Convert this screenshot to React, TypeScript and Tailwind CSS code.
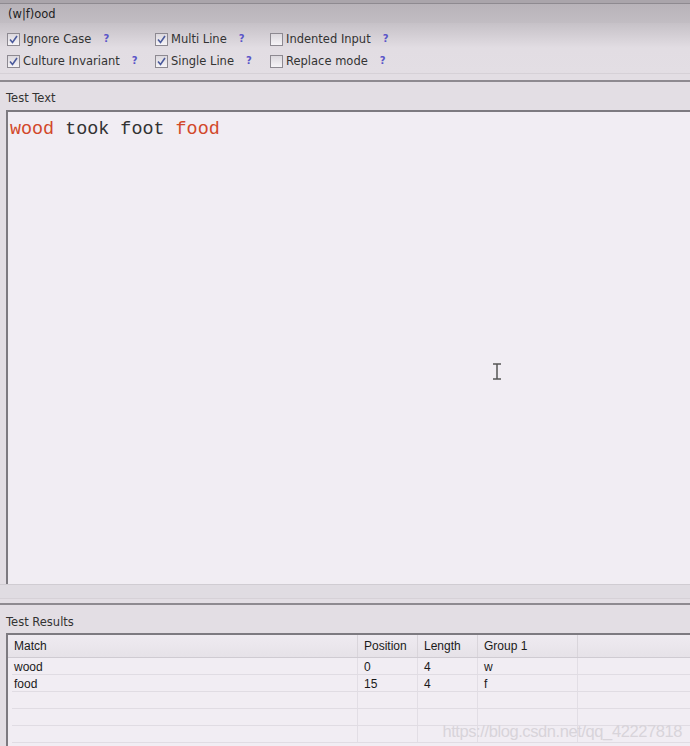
import React from 'react';

const options = [
  [
    { label: 'Ignore Case', checked: true, w: 'w-[148px]' },
    { label: 'Multi Line', checked: true, w: 'w-[115px]' },
    { label: 'Indented Input', checked: false, w: 'w-[130px]' },
  ],
  [
    { label: 'Culture Invariant', checked: true, w: 'w-[148px]' },
    { label: 'Single Line', checked: true, w: 'w-[115px]' },
    { label: 'Replace mode', checked: false, w: 'w-[130px]' },
  ],
];

const results = [
  { match: 'wood', pos: '0', len: '4', g1: 'w' },
  { match: 'food', pos: '15', len: '4', g1: 'f' },
  { match: '', pos: '', len: '', g1: '' },
  { match: '', pos: '', len: '', g1: '' },
  { match: '', pos: '', len: '', g1: '' },
];

function Check({ checked }: { checked: boolean }) {
  return (
    <span className="w-[13px] h-[13px] border border-[#8d8991] bg-gradient-to-b from-[#dcd8de] to-[#f6f4f7] flex items-center justify-center shrink-0">
      {checked && (
        <svg width="9" height="9" viewBox="0 0 9 9">
          <path d="M1 4.5 L3.5 7.5 L8 1" fill="none" stroke="#4b5a9c" strokeWidth="1.6" />
        </svg>
      )}
    </span>
  );
}

export default function App() {
  return (
    <div
      className="w-[690px] h-[746px] overflow-hidden bg-[#e3dee4] text-[#2a2a2a] flex flex-col text-[11.5px] leading-[14px]"
      style={{ fontFamily: '"DejaVu Sans", Verdana, sans-serif' }}
    >
      {/* top strip */}
      <div className="h-[3px] bg-[#aaa5ab]" />
      <div className="h-px bg-[#8e8a90]" />

      {/* pattern */}
      <div className="h-[19px] bg-gradient-to-b from-[#b8b3b9] to-[#c2bdc3] flex items-center px-[8px] text-[#222]">
        (w|f)ood
      </div>

      {/* options */}
      <div className="h-[50px] bg-gradient-to-b from-[#c6c1c7] via-[#e2dde3] via-50% to-[#e3dee4] flex flex-col pt-[5px] px-[7px]">
        {options.map((row, i) => (
          <div key={i} className="h-[22px] flex items-center">
            {row.map((o) => (
              <div key={o.label} className={`${o.w} flex items-center`}>
                <Check checked={o.checked} />
                <span className="ml-[3px] text-[#333]">{o.label}</span>
                <span className="ml-[12px] text-[#5a55c8] font-bold text-[10px]">?</span>
              </div>
            ))}
          </div>
        ))}
      </div>
      <div className="h-px bg-[#d6d1d7]" />
      <div className="h-[6px]" />
      <div className="h-[2px] bg-[#8e8a90]" />

      {/* test text */}
      <div className="h-[28px] pt-[9px] px-[6px] text-[#333]">Test Text</div>
      <div className="ml-[6px] h-[474px] border-l-2 border-t-2 border-[#7d7a80] bg-[#f1edf3] relative">
        <div
          className="pl-[2px] pt-[7px] text-[18.4px] leading-[22px] text-[#333]"
          style={{ fontFamily: '"Liberation Mono", "Courier New", monospace' }}
        >
          <span className="text-[#d2482a]">wood</span> took foot <span className="text-[#d2482a]">food</span>
        </div>
        <svg className="absolute left-[484px] top-[251px]" width="10" height="18" viewBox="0 0 10 18">
          <path d="M1 1 H9 M5 1 V16 M1 16 H9" fill="none" stroke="#555" strokeWidth="1.5" />
        </svg>
      </div>
      <div className="h-px bg-[#d0ccd2]" />
      <div className="h-[13px] bg-[#e0dce2]" />
      <div className="h-px bg-[#d6d1d7]" />
      <div className="h-[4px]" />
      <div className="h-[2px] bg-[#8e8a90]" />

      {/* test results */}
      <div className="h-[28px] pt-[10px] px-[6px] text-[#333]">Test Results</div>
      <div
        className="ml-[6px] flex-1 border-l-2 border-t-2 border-[#7d7a80] bg-[#f1edf3] relative text-[12px] text-[#1a1a1a]"
        style={{ fontFamily: '"Liberation Sans", Tahoma, sans-serif' }}
      >
        <div className="h-[23px] flex bg-gradient-to-b from-[#efebf1] to-[#e6e2e8] border-b border-[#cfcbd2]">
          <div className="w-[350px] pl-[6px] flex items-center border-r border-[#d9d5db]">Match</div>
          <div className="w-[60px] pl-[6px] flex items-center border-r border-[#d9d5db]">Position</div>
          <div className="w-[60px] pl-[6px] flex items-center border-r border-[#d9d5db]">Length</div>
          <div className="w-[100px] pl-[6px] flex items-center border-r border-[#d9d5db]">Group 1</div>
          <div className="flex-1" />
        </div>
        {results.map((r, i) => (
          <div key={i} className="h-[17px] flex border-b border-[#e0dce3] ml-[4px]">
            <div className="w-[346px] pl-[2px] pt-[2px] flex items-center border-r border-[#e2dee5]">{r.match}</div>
            <div className="w-[60px] pl-[6px] pt-[2px] flex items-center border-r border-[#e2dee5]">{r.pos}</div>
            <div className="w-[60px] pl-[6px] pt-[2px] flex items-center border-r border-[#e2dee5]">{r.len}</div>
            <div className="w-[100px] pl-[6px] pt-[2px] flex items-center border-r border-[#e2dee5]">{r.g1}</div>
            <div className="flex-1" />
          </div>
        ))}
        <div className="absolute right-[8px] bottom-[8px] text-[16.5px] text-[#d8d4da] tracking-tight">
          https://blog.csdn.net/qq_42227818
        </div>
      </div>
    </div>
  );
}
